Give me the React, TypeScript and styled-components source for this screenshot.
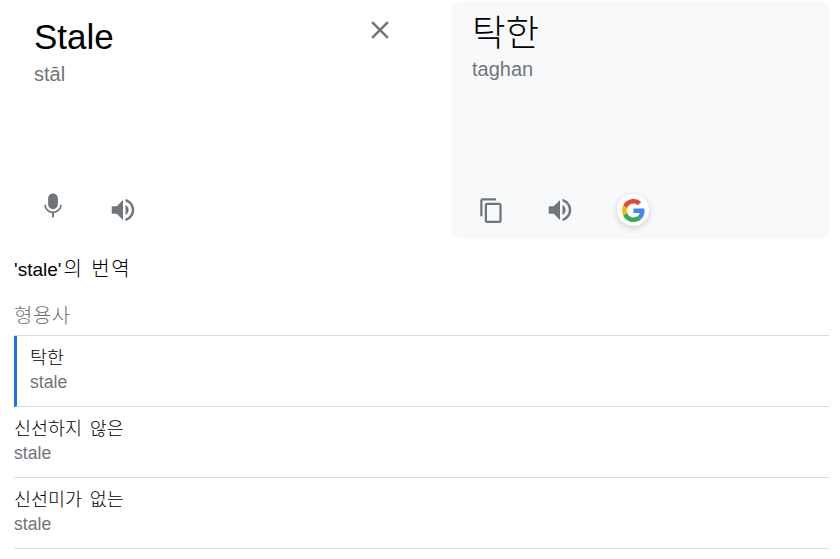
import React from 'react'
import styled, { createGlobalStyle } from 'styled-components'

const GlobalStyle = createGlobalStyle`
  html, body {
    margin: 0;
    padding: 0;
    background: #fff;
  }
  body {
    font-family: "Liberation Sans", "Noto Sans CJK KR", sans-serif;
    color: #000;
  }
`

const Page = styled.div`
  width: 840px;
  height: 559px;
  overflow: hidden;
  box-sizing: border-box;
  padding-right: 11px;
`

const Panels = styled.div`
  display: flex;
  height: 239px;
`

const Pane = styled.div<{ $filled?: boolean }>`
  box-sizing: border-box;
  display: flex;
  flex-direction: column;
  height: ${p => (p.$filled ? '238px' : '100%')};
  padding-left: ${p => (p.$filled ? '20px' : '34px')};
  flex: ${p => (p.$filled ? '1' : '0 0 452px')};
  background: ${p => (p.$filled ? '#f8f9fa' : 'transparent')};
  border-radius: ${p => (p.$filled ? '10px' : '0')};
  margin-top: ${p => (p.$filled ? '1px' : '0')};
`

const SourceHead = styled.div`
  display: flex;
  justify-content: space-between;
  padding-right: 57px;
`

const Word = styled.div<{ $top: number; $size: number; $bottom: number }>`
  font-size: ${p => p.$size}px;
  font-weight: 300;
  line-height: 40px;
  margin-top: ${p => p.$top}px;
  margin-bottom: ${p => p.$bottom}px;
`

const Roman = styled.div`
  font-size: 20px;
  line-height: 24px;
  color: #70757a;
`

const CloseButton = styled.div`
  display: flex;
  margin-top: 15px;
  color: #70757a;
`

const Actions = styled.div<{ $gap: number }>`
  display: flex;
  align-items: center;
  margin-top: auto;
  margin-left: 1px;
  gap: ${p => p.$gap}px;
  height: 58px;
  box-sizing: border-box;
`

const IconSlot = styled.div<{ $raised?: boolean }>`
  box-sizing: border-box;
  width: 36px;
  height: 36px;
  padding-bottom: ${p => (p.$raised ? '8px' : '0')};
  display: flex;
  align-items: center;
  justify-content: center;
  color: #70757a;
`

const GoogleBadge = styled.div`
  width: 32px;
  height: 32px;
  margin-left: 6px;
  border-radius: 50%;
  background: #fff;
  box-shadow: 0 2px 6px rgba(60, 64, 67, 0.22);
  display: flex;
  align-items: center;
  justify-content: center;
`

const Results = styled.div`
  padding-left: 14px;
`

const Heading = styled.div`
  font-size: 19px;
  line-height: 24px;
  margin-top: 18px;
`

const HangulRun = styled.span`
  font-size: 20px;
  font-weight: 300;
  letter-spacing: 1.5px;
  word-spacing: 1px;
  margin-left: 2px;
`

const PartOfSpeech = styled.div`
  font-size: 20px;
  font-weight: 300;
  letter-spacing: 0.5px;
  line-height: 24px;
  color: #70757a;
  margin-top: 22px;
  padding-bottom: 7px;
  border-bottom: 1px solid #dadce0;
`

const Row = styled.div<{ $active?: boolean }>`
  box-sizing: border-box;
  height: 71px;
  border-bottom: 1px solid #dadce0;
  padding-top: 10px;
  padding-left: ${p => (p.$active ? '13px' : '0')};
  border-left: ${p => (p.$active ? '3px solid #1a73e8' : '0')};
`

const Term = styled.div`
  font-size: 18.5px;
  font-weight: 300;
  word-spacing: 2.5px;
  line-height: 24px;
`

const Back = styled.div`
  font-size: 17.6px;
  line-height: 24px;
  color: #70757a;
`

const Glyph = ({ size, d }: { size: number; d: string }) => (
  <svg width={size} height={size} viewBox="0 0 24 24" fill="currentColor">
    <path d={d} />
  </svg>
)

const MIC = 'M12 14.5c2.1 0 3.9-1.7 3.9-3.9V5.9C15.9 3.7 14.1 2 12 2S8.1 3.7 8.1 5.9v4.7c0 2.2 1.8 3.9 3.9 3.9zm5.7-3.5c0 3-2.9 5.4-5.7 5.4S6.3 14 6.3 11H5c0 3.41 2.72 6.23 6.2 6.72V21h1.6v-3.28c3.48-.48 6.2-3.3 6.2-6.72h-1.3z'
const SPEAKER = 'M3 9v6h4l5 5V4L7 9H3zm13.5 3c0-1.77-1.02-3.29-2.5-4.03v8.05c1.48-.73 2.5-2.25 2.5-4.02zM14 3.23v2.06c2.89.86 5 3.54 5 6.71s-2.11 5.85-5 6.71v2.06c4.01-.91 7-4.49 7-8.77s-2.99-7.86-7-8.77z'
const COPY = 'M16 1H4c-1.1 0-2 .9-2 2v14h2V3h12V1zm3 4H8c-1.1 0-2 .9-2 2v14c0 1.1.9 2 2 2h11c1.1 0 2-.9 2-2V7c0-1.1-.9-2-2-2zm0 16H8V7h11v14z'
const CLOSE = 'M19 6.41 17.59 5 12 10.59 6.41 5 5 6.41 10.59 12 5 17.59 6.41 19 12 13.41 17.59 19 19 17.59 13.41 12z'

const GoogleLogo = () => (
  <svg width="23" height="23" viewBox="0 0 48 48">
    <path fill="#EA4335" d="M24 9.5c3.54 0 6.71 1.22 9.21 3.6l6.85-6.85C35.9 2.38 30.47 0 24 0 14.62 0 6.51 5.38 2.56 13.22l7.98 6.19C12.43 13.72 17.74 9.5 24 9.5z" />
    <path fill="#4285F4" d="M46.98 24.55c0-1.57-.15-3.09-.38-4.55H24v9.02h12.94c-.58 2.96-2.26 5.48-4.78 7.18l7.73 6c4.51-4.18 7.09-10.36 7.09-17.65z" />
    <path fill="#FBBC05" d="M10.53 28.59c-.48-1.45-.76-2.99-.76-4.59s.27-3.14.76-4.59l-7.98-6.19C.92 16.46 0 20.12 0 24c0 3.88.92 7.54 2.56 10.78l7.97-6.19z" />
    <path fill="#34A853" d="M24 48c6.48 0 11.93-2.13 15.89-5.81l-7.73-6c-2.15 1.45-4.92 2.3-8.16 2.3-6.26 0-11.57-4.22-13.47-9.91l-7.98 6.19C6.51 42.62 14.62 48 24 48z" />
  </svg>
)

const senses = [
  { term: '탁한', back: 'stale', active: true },
  { term: '신선하지 않은', back: 'stale' },
  { term: '신선미가 없는', back: 'stale' },
]

export default function App() {
  return (
    <Page>
      <GlobalStyle />
      <Panels>
        <Pane>
          <SourceHead>
            <div>
              <Word $top={17} $size={35} $bottom={5}>Stale</Word>
              <Roman>stāl</Roman>
            </div>
            <CloseButton>
              <Glyph size={30} d={CLOSE} />
            </CloseButton>
          </SourceHead>
          <Actions $gap={34}>
            <IconSlot $raised>
              <Glyph size={30} d={MIC} />
            </IconSlot>
            <IconSlot>
              <Glyph size={30} d={SPEAKER} />
            </IconSlot>
          </Actions>
        </Pane>
        <Pane $filled>
          <Word $top={13} $size={36.5} $bottom={3}>탁한</Word>
          <Roman>taghan</Roman>
          <Actions $gap={33}>
            <IconSlot>
              <Glyph size={27} d={COPY} />
            </IconSlot>
            <IconSlot>
              <Glyph size={30} d={SPEAKER} />
            </IconSlot>
            <GoogleBadge>
              <GoogleLogo />
            </GoogleBadge>
          </Actions>
        </Pane>
      </Panels>
      <Results>
        <Heading>'stale'<HangulRun>의 번역</HangulRun></Heading>
        <PartOfSpeech>형용사</PartOfSpeech>
        {senses.map(s => (
          <Row key={s.term} $active={s.active}>
            <Term>{s.term}</Term>
            <Back>{s.back}</Back>
          </Row>
        ))}
      </Results>
    </Page>
  )
}
